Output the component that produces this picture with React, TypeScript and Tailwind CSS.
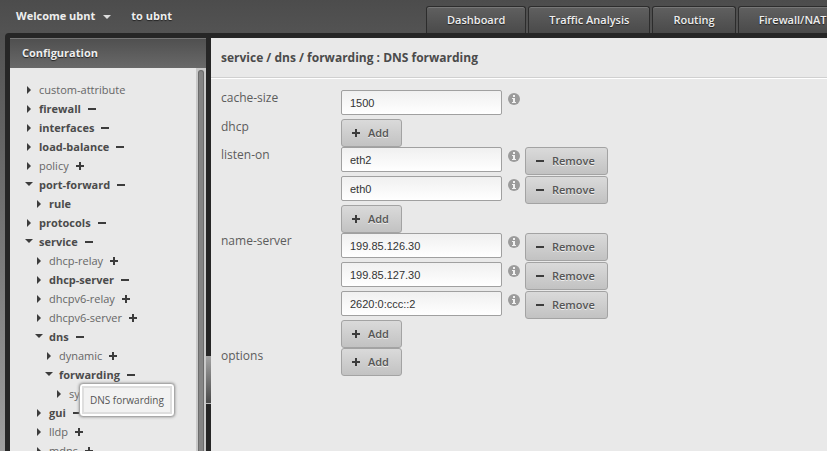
import { useState } from "react";
import clsx from "clsx";

type TreeNode = {
    name: string;
    level: number;
    open?: boolean;
    mark?: "plus" | "minus";
    bold?: boolean;
    tip?: string;
};

const tree: TreeNode[] = [
    { name: "custom-attribute", level: 0 },
    { name: "firewall", level: 0, mark: "minus", bold: true },
    { name: "interfaces", level: 0, mark: "minus", bold: true },
    { name: "load-balance", level: 0, mark: "minus", bold: true },
    { name: "policy", level: 0, mark: "plus" },
    { name: "port-forward", level: 0, mark: "minus", bold: true, open: true },
    { name: "rule", level: 1, bold: true },
    { name: "protocols", level: 0, mark: "minus", bold: true },
    { name: "service", level: 0, mark: "minus", bold: true, open: true },
    { name: "dhcp-relay", level: 1, mark: "plus" },
    { name: "dhcp-server", level: 1, mark: "minus", bold: true },
    { name: "dhcpv6-relay", level: 1, mark: "plus" },
    { name: "dhcpv6-server", level: 1, mark: "plus" },
    { name: "dns", level: 1, mark: "minus", bold: true, open: true },
    { name: "dynamic", level: 2, mark: "plus" },
    { name: "forwarding", level: 2, mark: "minus", bold: true, open: true, tip: "DNS forwarding" },
    { name: "system", level: 3 },
    { name: "gui", level: 1, mark: "minus", bold: true },
    { name: "lldp", level: 1, mark: "plus" },
    { name: "mdns", level: 1, mark: "plus" },
];

const indents = ["pl-[15px]", "pl-[25px]", "pl-[35px]", "pl-[45px]"];

const tabs = ["Dashboard", "Traffic Analysis", "Routing", "Firewall/NAT"];

type Field = { name: string; values: string[]; list?: boolean };

const fields: Field[] = [
    { name: "cache-size", values: ["1500"] },
    { name: "dhcp", values: [], list: true },
    { name: "listen-on", values: ["eth2", "eth0"], list: true },
    { name: "name-server", values: ["199.85.126.30", "199.85.127.30", "2620:0:ccc::2"], list: true },
    { name: "options", values: [], list: true },
];

function Mark({ kind }: { kind: "plus" | "minus" }) {
    return (
        <svg viewBox="0 0 8 8" className="h-2 w-2 shrink-0" fill="#3c3c3c" shapeRendering="crispEdges" aria-hidden="true">
            <rect x="0" y="3" width="8" height="2" />
            {kind === "plus" && <rect x="3" y="0" width="2" height="8" />}
        </svg>
    );
}

function Arrow({ open }: { open?: boolean }) {
    return (
        <svg viewBox="0 0 8 8" className="h-2 w-2 shrink-0" fill="#3c3c3c" aria-hidden="true">
            {open ? <path d="M0 1h8L4 5z" /> : <path d="M2 0l4 4-4 4z" />}
        </svg>
    );
}

function InfoIcon() {
    return (
        <svg viewBox="0 0 12 12" className="h-3 w-3 shrink-0" role="img" aria-label="Info">
            <circle cx="6" cy="6" r="6" fill="#9b9b9b" />
            <path d="M5 2h2v2H5zM4 5h3v4h1v1H4V9h1V6H4z" fill="#f2f2f2" />
        </svg>
    );
}

function TreeItem({ node }: { node: TreeNode }) {
    return (
        <li className={clsx("flex h-[19px] items-center", indents[node.level])}>
            <button type="button" aria-label={`Toggle ${node.name}`} className="mr-1.5">
                <Arrow open={node.open} />
            </button>
            <div className="relative flex items-center gap-[7px]">
                <a href="#" className={clsx("leading-4", node.bold ? "font-bold text-[#4b4b4b]" : "text-[#666]")}>
                    {node.name}
                </a>
                {node.mark && (
                    <button type="button" aria-label={`${node.mark === "plus" ? "Add" : "Delete"} ${node.name}`}>
                        <Mark kind={node.mark} />
                    </button>
                )}
                {node.tip && (
                    <div
                        role="tooltip"
                        className="absolute top-4 left-5 z-10 rounded-sm border border-[#a8a8a8] bg-white p-0.5 shadow-[0_0_3px_#888]"
                    >
                        <div className="border-2 border-[#dedede] bg-[#f2f2f2] px-1.5 py-1 text-[10px] leading-4 whitespace-nowrap text-[#555]">
                            {node.tip}
                        </div>
                    </div>
                )}
            </div>
        </li>
    );
}

function FormButton({ kind, onClick }: { kind: "plus" | "minus"; onClick: () => void }) {
    return (
        <button
            type="button"
            onClick={onClick}
            className="flex h-7 items-center gap-2 rounded-[3px] border border-[#a3a3a3] bg-linear-to-b from-[#dadada] to-[#c2c2c2] pr-3 pl-2.5 font-semibold text-[#555] [text-shadow:0_1px_0_#eee]"
        >
            <Mark kind={kind} />
            {kind === "plus" ? "Add" : "Remove"}
        </button>
    );
}

function FieldRow({ field }: { field: Field }) {
    const [values, setValues] = useState(field.values);
    return (
        <div role="group" aria-label={field.name} className="flex">
            <label htmlFor={`${field.name}-0`} className="w-[120px] shrink-0 text-xs leading-4 text-[#5c5c5c]">
                {field.name}
            </label>
            <div>
                {values.map((value, i) => (
                    <div key={i} className="flex h-[29px] items-start">
                        <input
                            id={`${field.name}-${i}`}
                            aria-label={`${field.name} ${i + 1}`}
                            type="text"
                            value={value}
                            onChange={(e) => setValues(values.map((v, j) => (j === i ? e.target.value : v)))}
                            className="h-[25px] w-[161px] rounded-[2px] border border-[#a0a0a0] bg-linear-to-b from-[#f0f0f0] to-white px-2 font-['Liberation_Sans',Arial,sans-serif] text-[11px] text-[#333]"
                        />
                        <span className="mt-[3px] mr-[5px] ml-1.5">
                            <InfoIcon />
                        </span>
                        {field.list && (
                            <FormButton kind="minus" onClick={() => setValues(values.filter((_, j) => j !== i))} />
                        )}
                    </div>
                ))}
                {field.list && <FormButton kind="plus" onClick={() => setValues([...values, ""])} />}
            </div>
        </div>
    );
}

export default function App() {
    return (
        <div className="flex h-screen flex-col overflow-hidden bg-linear-to-b from-[#4c4c4c] to-[#a0a0a0] font-['Open_Sans',sans-serif] text-[11px]">
            <header className="flex h-[33px] shrink-0 items-end bg-linear-to-b from-[#4c4c4c] to-[#535353] font-bold text-[#eee]">
                <div className="flex h-full w-[426px] shrink-0 items-center gap-5 pl-4 [text-shadow:0_1px_1px_#222]">
                    <button type="button" className="flex items-center gap-2">
                        Welcome ubnt
                        <svg viewBox="0 0 8 4" className="h-1 w-2" fill="#ddd" aria-hidden="true">
                            <path d="M0 0h8L4 4z" />
                        </svg>
                    </button>
                    <span>to ubnt</span>
                </div>
                <nav className="flex shrink-0 gap-0.5">
                    {tabs.map((tab) => (
                        <a
                            key={tab}
                            href="#"
                            className="flex h-[27px] items-center rounded-t-[3px] border border-b-0 border-[#2c2c2c] bg-linear-to-b from-[#606060] to-[#4a4a4a] px-5 font-semibold shadow-[inset_0_1px_0_#777] [text-shadow:0_1px_1px_#222]"
                        >
                            {tab}
                        </a>
                    ))}
                </nav>
            </header>

            <div className="ml-[5px] flex min-h-0 flex-1 rounded-tl-[4px] bg-[#262626] pt-[5px] pl-[5px]">
                <aside className="flex w-[196px] shrink-0 flex-col bg-[#e9e9e9]">
                    <h2 className="flex h-[30px] shrink-0 items-center border-t border-[#777] bg-linear-to-b from-[#505050] to-[#696969] px-3 font-bold text-[#eee] [text-shadow:0_1px_1px_#222]">
                        Configuration
                    </h2>
                    <div className="flex min-h-0 flex-1">
                        <ul className="min-w-0 flex-1 pt-3">
                            {tree.map((node) => (
                                <TreeItem key={node.name} node={node} />
                            ))}
                        </ul>
                        <div className="flex w-[10px] bg-[#c9c9c9] px-0.5 pt-0.5">
                            <div className="flex-1 rounded-t-[3px] border-x border-t border-[#6c6c6c] bg-[#858585]" />
                        </div>
                    </div>
                </aside>

                <div className="flex w-[5px] shrink-0 flex-col">
                    <div className="h-[77%]" />
                    <div className="h-12 shrink-0 border-b border-[#bbb] bg-linear-to-b from-[#a5a5a5] to-[#4a4a4a]" />
                </div>

                <main className="min-w-0 flex-1 bg-[#e9e9e9]">
                    <div className="border-b border-white">
                        <h1 className="flex h-10 items-center border-b border-[#d0d0d0] px-2.5 text-xs font-bold text-[#4b4b4b]">
                            service / dns / forwarding : DNS forwarding
                        </h1>
                    </div>
                    <form className="px-2.5 pt-[11px]" onSubmit={(e) => e.preventDefault()}>
                        {fields.map((field) => (
                            <FieldRow key={field.name} field={field} />
                        ))}
                    </form>
                </main>
            </div>
        </div>
    );
}
